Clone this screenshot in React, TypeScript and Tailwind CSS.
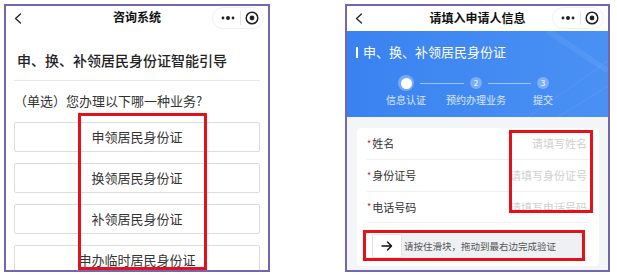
import React from "react";

const FONT = { fontFamily: '"Noto Sans CJK SC", "Noto Sans", sans-serif' };

function Back() {
  return (
    <svg width="8" height="11" viewBox="0 0 8 11" fill="none">
      <polyline points="6.5,1 1.5,5.5 6.5,10" stroke="#222" strokeWidth="1.3" strokeLinecap="round" strokeLinejoin="round" />
    </svg>
  );
}

function Capsule() {
  return (
    <div className="absolute right-[4px] top-[1px] h-[22px] w-[52px] rounded-full border border-[#f0f0f0] flex items-center">
      <div className="w-[27px] flex justify-center pl-[2px]">
        <svg width="14" height="6" viewBox="0 0 14 6">
          <circle cx="2" cy="3" r="1.4" fill="#222" />
          <circle cx="7" cy="3" r="2" fill="#222" />
          <circle cx="12" cy="3" r="1.4" fill="#222" />
        </svg>
      </div>
      <div className="w-px h-[14px] bg-[#e6e6e6]" />
      <div className="flex-1 flex justify-center">
        <svg width="14" height="14" viewBox="0 0 14 14">
          <circle cx="7" cy="7" r="5.8" fill="none" stroke="#222" strokeWidth="1.5" />
          <circle cx="7" cy="7" r="2.4" fill="#222" />
        </svg>
      </div>
    </div>
  );
}

function NavBar({ title, h }: { title: string; h: string }) {
  return (
    <div className={`relative ${h} flex items-center justify-center shrink-0 bg-white`}>
      <div className="absolute left-[8px] top-[7px]">
        <Back />
      </div>
      <span className="text-[12px] font-bold text-[#111] leading-[16px] -mt-[2px]">{title}</span>
      <Capsule />
    </div>
  );
}

function LeftPanel() {
  const items = ["申领居民身份证", "换领居民身份证", "补领居民身份证", "申办临时居民身份证"];
  return (
    <div className="relative w-[266px] h-[268px] border-2 border-[#7466b3] bg-white overflow-hidden flex flex-col" style={FONT}>
      <NavBar title="咨询系统" h="h-[24px]" />
      <div className="px-[8px]">
        <div className="pt-[20px] pb-[10px] border-b border-[#e8e8e8]">
          <div className="pl-[3px] text-[14px] leading-[20px] text-[#222] font-medium">申、换、补领居民身份证智能引导</div>
        </div>
        <div className="mt-[10px] text-[13px] leading-[20px] text-[#333] pl-[0px]">（单选）您办理以下哪一种业务?</div>
        <div className="mt-[11px] flex flex-col gap-[11px]">
          {items.map((t) => (
            <div key={t} className="h-[30px] border border-[#dcdcdc] rounded-[2px] flex items-center justify-center text-[13px] text-[#333]">
              {t}
            </div>
          ))}
        </div>
      </div>
      <div className="absolute left-[72px] top-[107px] w-[129px] h-[157px] border-[3px] border-[#e5101a]" />
    </div>
  );
}

function RightPanel() {
  const rows = [
    { label: "姓名", ph: "请填写姓名", h: "h-[32px]" },
    { label: "身份证号", ph: "请填写身份证号", h: "h-[32px]" },
    { label: "电话号码", ph: "请填写电话号码", h: "h-[31px]" },
  ];
  return (
    <div className="relative w-[265px] h-[268px] border-2 border-[#7466b3] bg-[#f4f5f7] overflow-hidden flex flex-col" style={FONT}>
      <NavBar title="请填入申请人信息" h="h-[25px]" />
      <div className="relative h-[86px] shrink-0 bg-gradient-to-r from-[#3a82f0] to-[#4a91f4] overflow-hidden">
        <svg className="absolute right-0 top-0" width="120" height="86" viewBox="0 0 120 86">
          <path d="M40 86 L120 30" stroke="#ffffff" strokeOpacity="0.08" strokeWidth="1" />
          <path d="M70 86 L120 55" stroke="#ffffff" strokeOpacity="0.08" strokeWidth="1" />
          <path d="M60 0 L120 40" stroke="#ffffff" strokeOpacity="0.06" strokeWidth="6" />
        </svg>
        <div className="relative pt-[12px] pl-[9px] flex items-center h-[30px]">
          <div className="w-[2px] h-[11px] bg-white mr-[5px]" />
          <span className="text-[13px] leading-[18px] text-white">申、换、补领居民身份证</span>
        </div>
        <div className="relative mt-[14px] h-[16px] flex items-center pl-[51px]">
          <div className="w-[16px] h-[16px] rounded-full bg-white/30 flex items-center justify-center">
            <div className="w-[11px] h-[11px] rounded-full bg-white" />
          </div>
          <div className="w-[44px] h-px bg-white/50 mx-[6px]" />
          <div className="w-[12px] h-[12px] rounded-full bg-white/30 flex items-center justify-center text-[8px] leading-none text-white">2</div>
          <div className="w-[43px] h-px bg-white/50 mx-[6px]" />
          <div className="w-[12px] h-[12px] rounded-full bg-white/30 flex items-center justify-center text-[8px] leading-none text-white">3</div>
        </div>
        <div className="relative mt-[2px] pl-[24px] flex text-[10px] leading-[14px] text-white/80">
          <div className="w-[70px] text-center">信息认证</div>
          <div className="w-[70px] text-center">预约办理业务</div>
          <div className="w-[64px] text-center">提交</div>
        </div>
      </div>
      <div className="mt-[11px] ml-[10px] mr-[9px] bg-white rounded-[4px] pb-[8px]">
        {rows.map((r) => (
          <div key={r.label} className={`${r.h} mx-[10px] border-b border-[#efefef] flex items-center justify-between`}>
            <span className="text-[11px] text-[#333] flex items-center">
              <span className="text-[#e5101a] text-[9px] mr-[1px]">*</span>
              {r.label}
            </span>
            <span className="text-[11px] text-[#cfcfcf] pr-[2px]">{r.ph}</span>
          </div>
        ))}
        <div className="mt-[11px] ml-[15px] mr-[16px] h-[24px] bg-[#eef0f3] flex items-center">
          <div className="w-[30px] h-[24px] bg-white border border-[#e3e3e3] flex items-center justify-center">
            <svg width="12" height="10" viewBox="0 0 12 10" fill="none">
              <path d="M1 5 H10.5 M6.5 1 L10.5 5 L6.5 9" stroke="#111" strokeWidth="1.4" strokeLinecap="round" strokeLinejoin="round" />
            </svg>
          </div>
          <span className="ml-[2px] text-[9.5px] text-[#555] whitespace-nowrap">请按住滑块，拖动到最右边完成验证</span>
        </div>
      </div>
      <div className="absolute left-[162px] top-[124px] w-[84px] h-[83px] border-[3px] border-[#e5101a]" />
      <div className="absolute left-[16px] top-[224px] w-[222px] h-[31px] border-[3px] border-[#e5101a]" />
    </div>
  );
}

export default function App() {
  return (
    <div className="w-[617px] h-[279px] bg-white flex items-start pt-[4px] pl-[4px] gap-[75px]">
      <LeftPanel />
      <RightPanel />
    </div>
  );
}
